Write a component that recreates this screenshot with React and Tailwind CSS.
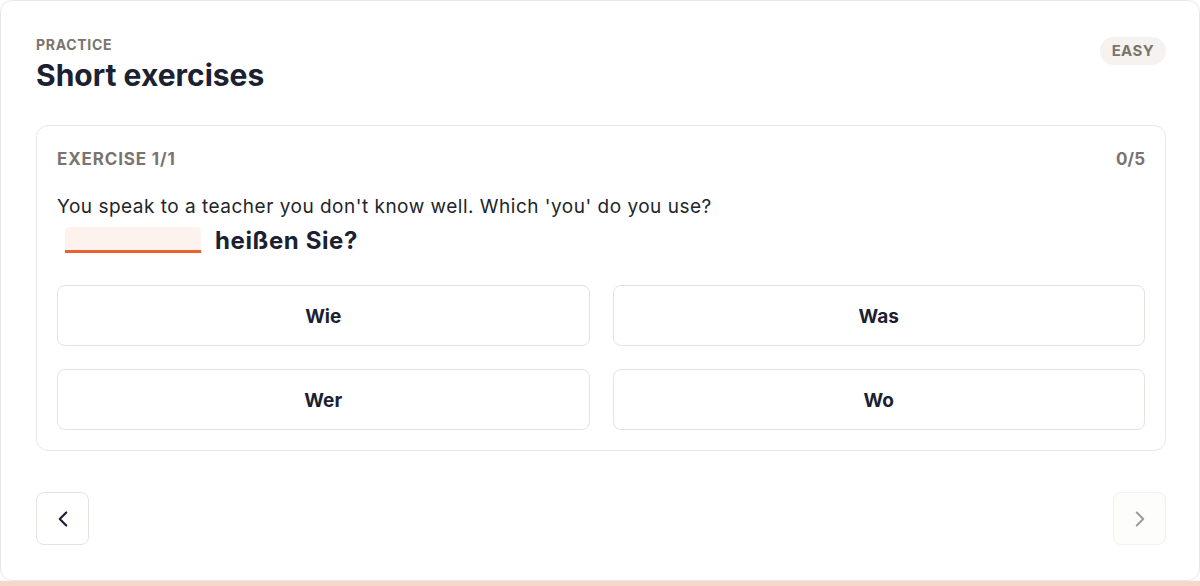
import React from 'react';
import { ChevronLeft, ChevronRight } from 'lucide-react';

const options = ['Wie', 'Was', 'Wer', 'Wo'];

const App = () => {
  return (
    <div className="w-[1200px] h-[586px] bg-white flex flex-col" style={{ fontFamily: 'Inter, "Noto Sans", sans-serif' }}>
      <div className="h-[581px] border border-[#ebe7e4] rounded-xl bg-white pl-[35px] pr-[33px] pt-[36px] flex flex-col">
        <div className="flex items-start justify-between">
          <div>
            <div className="text-[14px] leading-4 font-bold tracking-wider text-[#7b736d] uppercase">Practice</div>
            <h1 className="mt-[4px] text-[30px] leading-[36px] font-bold text-[#1b2130]">Short exercises</h1>
          </div>
          <span className="mt-0 px-3 h-[28px] flex items-center rounded-full bg-[#f5f2ef] text-[15px] font-bold tracking-wide text-[#7b736d]">EASY</span>
        </div>

        <div className="mt-[32px] border border-[#ebe7e4] rounded-xl px-[20px] pt-[22px] pb-[20px]">
          <div className="flex items-center justify-between h-6">
            <span className="text-[17px] font-bold tracking-wider text-[#7b736d]">EXERCISE 1/1</span>
            <span className="text-[17px] font-bold text-[#7b736d]">0/5</span>
          </div>
          <p className="mt-[21px] text-[19px] leading-7 tracking-[0.5px] text-[#22252b]">You speak to a teacher you don't know well. Which 'you' do you use?</p>
          <div className="mt-[6px] ml-2 flex items-end gap-[14px] h-[26px]">
            <span className="w-[136px] h-[26px] bg-[#fdf2ed] border-b-[3px] border-[#e9622e] rounded-t-sm"></span>
            <span className="text-[24px] leading-[30px] font-bold tracking-[0.6px] text-[#1b2130] relative top-[3px]">heißen Sie?</span>
          </div>
          <div className="mt-[32px] grid grid-cols-2 gap-x-[23px] gap-y-[23px]">
            {options.map((o) => (
              <button key={o} className="h-[61px] pt-[3px] border border-[#e6e2de] rounded-lg bg-white text-[19px] font-bold text-[#1b2130]">
                {o}
              </button>
            ))}
          </div>
        </div>

        <div className="mt-[41px] flex items-center justify-between">
          <button className="w-[53px] h-[53px] flex items-center justify-center border border-[#e6e2de] rounded-lg bg-white text-[#1b2130]">
            <ChevronLeft size={26} strokeWidth={2} />
          </button>
          <button className="w-[53px] h-[53px] flex items-center justify-center border border-[#f3f1ef] rounded-lg bg-[#fdfdfc] text-[#9a9a9a]">
            <ChevronRight size={26} strokeWidth={1.75} />
          </button>
        </div>
      </div>
      <div className="flex-1 bg-[#f8d6ca]"></div>
    </div>
  );
};

export default App;
